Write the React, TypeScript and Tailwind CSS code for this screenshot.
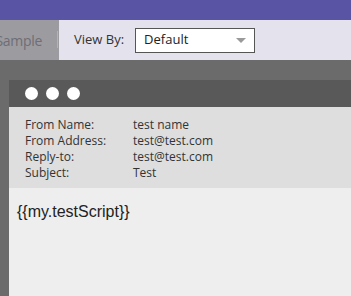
export default function App() {
  const rows: [string, string][] = [
    ["From Name:", "test name"],
    ["From Address:", "test@test.com"],
    ["Reply-to:", "test@test.com"],
    ["Subject:", "Test"],
  ];
  return (
    <div className="w-[351px] h-[296px] overflow-hidden bg-[#6b6b6b] flex flex-col" style={{ fontFamily: '"Open Sans", sans-serif' }}>
      <div className="h-[20px] bg-[#5a54a4] shrink-0" />
      <div className="h-[40px] bg-[#e4e2ec] flex items-center shrink-0">
        <div className="w-[59px] h-full bg-[#9c9ba0] flex items-center justify-end relative overflow-hidden">
          <span className="text-[14px] tracking-[-0.3px] text-[#6f6e74] pr-[17px] whitespace-nowrap">Sample</span>
          <div className="absolute right-[1px] top-[11px] h-[17px] w-[1px] bg-[#b3b2b8]" />
        </div>
        <span className="ml-[15px] text-[13px] text-[#333]">View By:</span>
        <div className="ml-[11px] w-[120px] h-[25px] border border-[#555] bg-white flex items-center justify-between pl-[8px] pr-[8px]">
          <span className="text-[13px] text-[#222]">Default</span>
          <svg width="10" height="5" viewBox="0 0 10 5"><polygon points="0,0 10,0 5,5" fill="#9a9a9a" /></svg>
        </div>
      </div>
      <div className="flex-1 pt-[20px] pl-[9px]">
        <div className="h-full flex flex-col">
          <div className="h-[27px] bg-[#595959] flex items-center pl-[16px] gap-[8px] shrink-0">
            <div className="w-[13px] h-[13px] rounded-full bg-white" />
            <div className="w-[13px] h-[13px] rounded-full bg-white" />
            <div className="w-[13px] h-[13px] rounded-full bg-white" />
          </div>
          <div className="bg-[#dedede] pt-[10px] pb-[7px] pl-[16px] shrink-0">
            {rows.map(([l, v]) => (
              <div key={l} className="flex text-[12px] leading-[16px] text-[#333]">
                <span className="w-[108px]">{l}</span>
                <span>{v}</span>
              </div>
            ))}
          </div>
          <div className="flex-1 bg-[#eeeeee] pt-[15px] pl-[8px]">
            <div className="text-[16px] leading-[18px] text-[#222]" style={{ fontFamily: '"Liberation Sans", Arial, sans-serif' }}>{"{{my.testScript}}"}</div>
          </div>
        </div>
      </div>
    </div>
  );
}
